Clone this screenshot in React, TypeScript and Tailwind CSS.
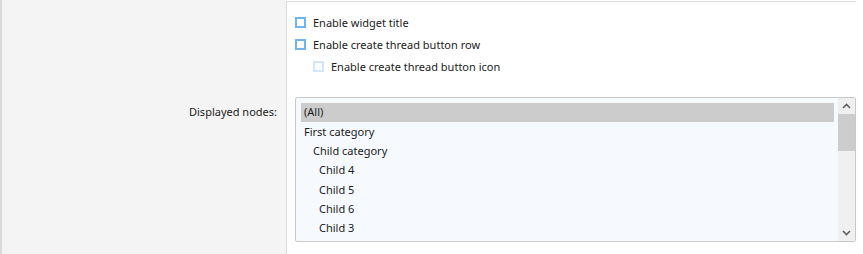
import React from "react";

const font = { fontFamily: '"Noto Sans", "Open Sans", sans-serif' };

function Check({ label, disabled, indent }: { label: string; disabled?: boolean; indent?: boolean }) {
  return (
    <div className={`flex items-center h-[22px] ${indent ? "pl-[18px]" : ""}`}>
      <span
        className={`w-[11px] h-[11px] border-2 ${disabled ? "border-[#d3e7f8] bg-[#fafcfe]" : "border-[#6fb4ef] bg-white"}`}
      />
      <span className="ml-[7px] text-[11px] text-[#1b1b1b] leading-none">{label}</span>
    </div>
  );
}

const rows: { t: string; pl: string; sel?: boolean }[] = [
  { t: "(All)", pl: "pl-[3px]", sel: true },
  { t: "First category", pl: "pl-[3px]" },
  { t: "Child category", pl: "pl-[12px]" },
  { t: "Child 4", pl: "pl-[18px]" },
  { t: "Child 5", pl: "pl-[18px]" },
  { t: "Child 6", pl: "pl-[18px]" },
  { t: "Child 3", pl: "pl-[18px]" },
];

export default function App() {
  return (
    <div className="w-[863px] h-[254px] flex bg-white overflow-hidden" style={font}>
      <div className="w-[286px] h-full bg-[#f4f4f4] border-l-2 border-[#dadada] flex flex-col">
        <div className="h-[97px]" />
        <div className="flex justify-end pr-[9px] pt-[7px] text-[11px] text-[#1b1b1b]">Displayed nodes:</div>
      </div>
      <div className="w-[570px] h-full pt-px">
        <div className="h-full border-t border-l border-[#dcdcdc] flex flex-col">
          <div className="pl-[8px] pt-[9px] flex flex-col">
            <Check label="Enable widget title" />
            <Check label="Enable create thread button row" />
            <Check label="Enable create thread button icon" disabled indent />
          </div>
          <div className="pl-[8px] pt-[20px]">
            <div className="w-[561px] h-[145px] border border-[#c9c9c9] rounded-[2px] bg-[#f6fafe] flex overflow-hidden">
              <div className="flex-1 pl-[5px] pr-[4px] pt-[5px] flex flex-col">
                {rows.map((r) => (
                  <div
                    key={r.t}
                    className={`h-[19.3px] shrink-0 flex items-center text-[11px] text-[#1b1b1b] ${r.pl} ${r.sel ? "bg-[#cccccc]" : ""}`}
                  >
                    {r.t}
                  </div>
                ))}
              </div>
              <div className="w-[17px] h-full bg-[#f0f0f0] flex flex-col items-center">
                <div className="h-[16px] flex items-center justify-center">
                  <svg width="9" height="6" viewBox="0 0 9 6">
                    <path d="M1 5 L4.5 1.5 L8 5" stroke="#606060" strokeWidth="1.6" fill="none" />
                  </svg>
                </div>
                <div className="w-full h-[37px] bg-[#cdcdcd]" />
                <div className="flex-1" />
                <div className="h-[16px] flex items-center justify-center">
                  <svg width="9" height="6" viewBox="0 0 9 6">
                    <path d="M1 1 L4.5 4.5 L8 1" stroke="#606060" strokeWidth="1.6" fill="none" />
                  </svg>
                </div>
              </div>
            </div>
          </div>
        </div>
      </div>
    </div>
  );
}
